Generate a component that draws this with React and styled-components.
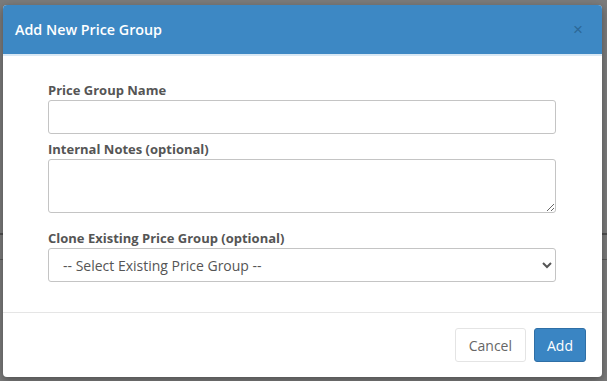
import React from 'react';
import styled, { createGlobalStyle } from 'styled-components';

const GlobalStyle = createGlobalStyle`
  html, body {
    margin: 0;
    padding: 0;
    height: 100%;
  }
  body {
    font-family: "Open Sans", "Liberation Sans", sans-serif;
    background: #7b7b7b;
  }
  #root {
    height: 100%;
  }
`;

/* Backdrop with the faint table lines of the page underneath the overlay. */
const Backdrop = styled.div`
  box-sizing: border-box;
  width: 607px;
  height: 381px;
  padding: 5px 5px 4px 3px;
  background:
    linear-gradient(#4f4f4f, #4f4f4f) 0 233px / 100% 2px no-repeat,
    linear-gradient(#5a5a5a, #5a5a5a) 0 259px / 100% 1px no-repeat,
    #7b7b7b;
`;

const Modal = styled.div`
  display: flex;
  flex-direction: column;
  height: 100%;
  background: #fff;
  border-radius: 4px;
  overflow: hidden;
  box-shadow: 0 3px 9px rgba(0, 0, 0, 0.35);
`;

const Header = styled.div`
  flex-shrink: 0;
  box-sizing: border-box;
  display: flex;
  align-items: center;
  justify-content: space-between;
  height: 51px;
  padding: 0 19px 1px 12px;
  background: #3d88c4;
  border-bottom: 2px solid #d9e8f4;
`;

const Title = styled.h4`
  margin: 0;
  font-size: 14.3px;
  font-weight: 600;
  color: #fff;
`;

const Close = styled.button`
  border: 0;
  padding: 0;
  background: none;
  font-family: "Liberation Sans", sans-serif;
  font-size: 17px;
  line-height: 1;
  color: #2c6898;
  cursor: pointer;
`;

const Body = styled.div`
  flex-shrink: 0;
  box-sizing: border-box;
  height: 257px;
  padding: 26px 46px 0 45px;
  border-bottom: 1px solid #e5e5e5;
`;

const Field = styled.div`
  display: flex;
  flex-direction: column;
  margin-bottom: ${p => p.$gap || 8}px;
`;

const Label = styled.label`
  font-size: 13px;
  font-weight: 700;
  color: #555;
  line-height: 16px;
  margin-bottom: 2px;
`;

const Input = styled.input`
  box-sizing: border-box;
  height: 34px;
  border: 1px solid #c4c4c4;
  border-radius: 3px;
  padding: 6px 12px;
  font: inherit;
`;

const TextArea = styled.textarea`
  box-sizing: border-box;
  height: 54px;
  border: 1px solid #c4c4c4;
  border-radius: 3px;
  padding: 6px 12px;
  font: inherit;
  resize: vertical;
  display: block;
`;

const Select = styled.select`
  box-sizing: border-box;
  height: 34px;
  border: 1px solid #c4c4c4;
  border-radius: 3px;
  padding: 4px 10px 4px 10px;
  font-family: "Open Sans", "Liberation Sans", sans-serif;
  font-size: 14px;
  color: #555;
  background: #fff;
`;

const Footer = styled.div`
  display: flex;
  justify-content: flex-end;
  gap: 8px;
  padding: 15px 16px 16px;
`;

const Button = styled.button`
  box-sizing: border-box;
  height: 34px;
  padding: 0 ${p => (p.$primary ? 12 : 13)}px;
  border-radius: 3px;
  font-family: "Open Sans", "Liberation Sans", sans-serif;
  font-size: 14px;
  cursor: pointer;
  border: 1px solid ${p => (p.$primary ? '#2f6fa6' : '#e4e4e4')};
  background: ${p => (p.$primary ? '#3a85c3' : '#fff')};
  color: ${p => (p.$primary ? '#fff' : '#666')};
`;

export default function App() {
  return (
    <>
      <GlobalStyle />
      <Backdrop>
        <Modal>
          <Header>
            <Title>Add New Price Group</Title>
            <Close aria-label="Close">×</Close>
          </Header>
          <Body>
            <Field $gap={7}>
              <Label>Price Group Name</Label>
              <Input type="text" />
            </Field>
            <Field $gap={17}>
              <Label>Internal Notes (optional)</Label>
              <TextArea />
            </Field>
            <Field>
              <Label>Clone Existing Price Group (optional)</Label>
              <Select defaultValue="">
                <option value="">-- Select Existing Price Group --</option>
              </Select>
            </Field>
          </Body>
          <Footer>
            <Button>Cancel</Button>
            <Button $primary>Add</Button>
          </Footer>
        </Modal>
      </Backdrop>
    </>
  );
}
